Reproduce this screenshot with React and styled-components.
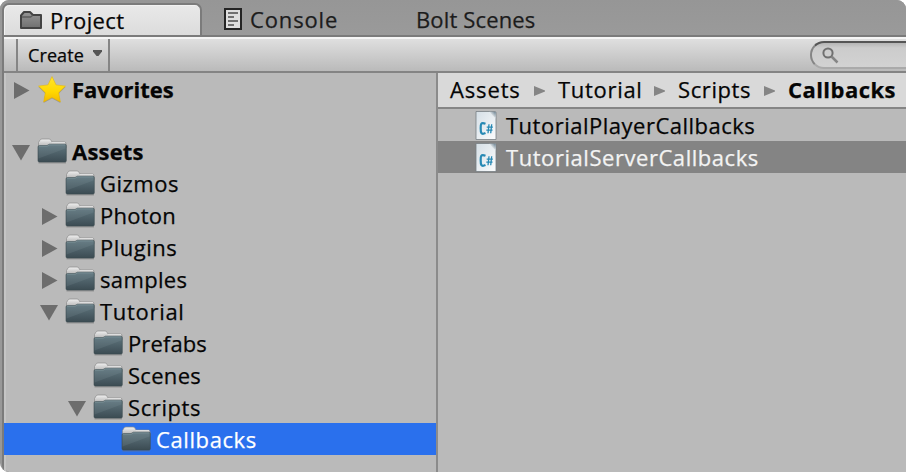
import React from "react";
import styled, { createGlobalStyle } from "styled-components";

const Global = createGlobalStyle`
  * { box-sizing: border-box; }
  body { margin: 0; background: #fff; overflow: hidden; }
`;

const Window = styled.div`
  width: 906px;
  height: 472px;
  display: flex;
  flex-direction: column;
  overflow: hidden;
  border-radius: 9px 9px 0 9px;
  background: #989898;
  font-family: "Open Sans", "Noto Sans", sans-serif;
  font-size: 22px;
  color: #050505;
`;

const TabBar = styled.div`
  height: 35px;
  flex: none;
  display: flex;
  align-items: flex-end;
  padding-left: 2px;
  background: linear-gradient(#969696, #9a9a9a);
`;

const Tab = styled.div`
  width: ${(p) => p.$width}px;
  height: 32px;
  display: flex;
  align-items: center;
  padding-left: ${(p) => p.$pad}px;
  color: #1c1c1c;
  svg { flex: none; }
`;

const ActiveTab = styled(Tab)`
  height: 32px;
  padding-bottom: 1px;
  border: 2px solid #7b7b7b;
  border-bottom: 0;
  border-radius: 7px 7px 0 0;
  background: linear-gradient(#e9e9e9, #dcdcdc);
  box-shadow: inset 1px 1px 0 #f2f2f2;
  color: #050505;
`;

const Label = styled.span`
  display: block;
  white-space: nowrap;
  line-height: 30px;
  margin-left: ${(p) => p.$gap || 0}px;
  font-weight: ${(p) => (p.$bold ? 700 : 400)};
  letter-spacing: ${(p) => p.$track || 0}px;
  -webkit-text-stroke: 0.25px currentColor;
`;

const Panel = styled.div`
  flex: 1;
  min-height: 0;
  display: flex;
  flex-direction: column;
  margin-left: 2px;
  border-left: 2px solid #7b7b7b;
  border-bottom-left-radius: 7px;
  background: #bababa;
`;

const Toolbar = styled.div`
  height: 38px;
  flex: none;
  display: flex;
  align-items: flex-start;
  justify-content: space-between;
  border-top: 2px solid #7b7b7b;
  border-bottom: 2px solid #848484;
  background: linear-gradient(#f5f5f5 0 2px, #dfdfdf 2px, #bababa);
`;

const CreateButton = styled.div`
  width: 94px;
  height: 32px;
  margin: 2px 0 0 12px;
  padding-left: 10px;
  display: flex;
  align-items: center;
  border: solid #858585;
  border-width: 0 2px;
  font-size: 18px;
  svg { margin: 0 0 4px 9px; }
`;

const Search = styled.div`
  width: 96px;
  height: 28px;
  margin-top: 4px;
  padding: 4px 0 0 10px;
  border: 2px solid #858585;
  border-top-color: #555;
  border-bottom-color: #aaa;
  border-right: 0;
  border-radius: 14px 0 0 14px;
  background: linear-gradient(#b5b5b5, #cccccc 5px, #d2d2d2);
`;

const Columns = styled.div`
  flex: 1;
  display: flex;
  min-height: 0;
`;

const Tree = styled.div`
  width: 434px;
  flex: none;
  border-right: 2px solid #8b8b8b;
  box-shadow: inset 2px 0 0 #c5c5c5;
`;

const TreeRow = styled.div`
  height: 32px;
  display: flex;
  align-items: center;
  margin-bottom: ${(p) => p.$after || 0}px;
  padding: 0 0 0 ${(p) => 7 + p.$depth * 28}px;
  background: ${(p) => (p.$selected ? "#2a70ed" : "transparent")};
  color: ${(p) => (p.$selected ? "#fff" : "inherit")};
`;

const Slot = styled.span`
  width: ${(p) => p.$width}px;
  height: 32px;
  flex: none;
  svg { display: block; }
`;

const Content = styled.div`
  flex: 1;
  min-width: 0;
`;

const Breadcrumbs = styled.div`
  height: 36px;
  display: flex;
  align-items: center;
  padding: 0 0 2px 12px;
  border-bottom: 2px solid #858585;
  background: #d9d9d9;
`;

const Crumb = styled.div`
  width: ${(p) => p.$width}px;
  flex: none;
  display: flex;
  align-items: center;
  justify-content: space-between;
  svg { margin: 4px 13px 0 0; }
`;

const FileRow = styled.div`
  height: 32px;
  display: flex;
  align-items: center;
  padding-left: 36px;
  background: ${(p) => (p.$selected ? "#848484" : "transparent")};
  color: ${(p) => (p.$selected ? "#f3f3f3" : "inherit")};
  svg { flex: none; }
`;

function Folder() {
  return (
    <svg width="32" height="32" viewBox="0 0 32 32">
      <defs>
        <linearGradient id="front" x1="0" y1="0" x2="0" y2="1">
          <stop offset="0" stopColor="#617780" />
          <stop offset="1" stopColor="#3b4b52" />
        </linearGradient>
        <linearGradient id="back" x1="0" y1="0" x2="0" y2="1">
          <stop offset="0" stopColor="#f0f0f0" />
          <stop offset="1" stopColor="#a9a9a9" />
        </linearGradient>
      </defs>
      <path d="M2.500 27.800h27.500" stroke="#777" strokeOpacity=".55" strokeWidth="1.200" />
      <path d="M2.500 13V7.500L4 5Q4.500 4 6 4h7q1.200 0 2 1.200L16 7H28.500q1.500 0 1.500 1.800V13z" fill="url(#back)" stroke="#8b8b8b" strokeWidth=".7" />
      <path d="M16 7.500h13" stroke="#dedede" />
      <path d="M2 12q0-1.500 1.500-1.500H11l2.500-1.300H29q1.300 0 1.300 1.300V25.800q0 1.300-1.300 1.300H3.400Q2 27.100 2 25.700z" fill="url(#front)" stroke="#3c4b51" strokeWidth=".6" />
      <path d="M2.500 11.500h8.700l2.500-1.500H29.500V13.500L2.500 23.500z" fill="#8ca3aa" fillOpacity=".16" />
      <path d="M3 11.200h8.200l2.500-1.300h15.600" fill="none" stroke="#83989e" strokeWidth=".7" />
    </svg>
  );
}

function Star() {
  return (
    <svg width="32" height="32" viewBox="0 0 32 32">
      <defs>
        <linearGradient id="gold" x1="0" y1="0" x2="0" y2="1">
          <stop offset="0" stopColor="#ffe42e" />
          <stop offset=".6" stopColor="#ffd800" />
          <stop offset="1" stopColor="#f2b800" />
        </linearGradient>
      </defs>
      <path d="M16 4.500l4.100 8.400 9.400 1.200-6.800 6.600 1.700 9.300-8.400-4.500-8.400 4.500 1.700-9.300-6.800-6.600 9.400-1.200z" fill="#777" opacity=".5" />
      <path d="M16 3.500l4.100 8.400 9.400 1.200-6.800 6.600 1.700 9.300-8.400-4.500-8.400 4.500 1.700-9.300-6.800-6.600 9.400-1.200z" fill="url(#gold)" stroke="#e5b400" strokeWidth=".5" />
    </svg>
  );
}

function Disclosure({ open }) {
  return (
    <svg width="28" height="32" viewBox="0 0 28 32">
      <path d={open ? "M1 10H19L10 25.500z" : "M3 9L18.500 17.500L3 26z"} fill="#6d6d6d" />
    </svg>
  );
}

function ScriptIcon() {
  return (
    <svg width="24" height="32" viewBox="0 0 24 32">
      <defs>
        <linearGradient id="paper" x1="0" y1="0" x2="1" y2="1">
          <stop offset="0" stopColor="#d5dfe6" />
          <stop offset="1" stopColor="#fbfcfd" />
        </linearGradient>
        <linearGradient id="fold" x1="0" y1="1" x2="1" y2="0">
          <stop offset=".35" stopColor="#fafafa" />
          <stop offset="1" stopColor="#60798a" />
        </linearGradient>
      </defs>
      <path d="M2 2.500h19q1 0 1 1V30.500H2z" fill="url(#paper)" stroke="#777f84" strokeWidth=".8" />
      <path d="M15.500 2.800q1.500 3 6.200 6.700V3z" fill="url(#fold)" />
      <path d="M11.500 14.800C6.200 12.800 6.700 16 6.700 19.500s0 6.800 4.800 4.600" fill="none" stroke="#2789b4" strokeWidth="2.200" />
      <path d="M15 15.200l-1 9M17.700 15.200l-1 9M12.700 18.200h6.200M12.300 21.200h6.200" fill="none" stroke="#2789b4" strokeWidth="1.300" />
    </svg>
  );
}

function ProjectIcon() {
  return (
    <svg width="24" height="20" viewBox="0 0 24 20">
      <defs>
        <linearGradient id="case" x1="0" y1="0" x2="0" y2="1">
          <stop offset="0" stopColor="#969696" />
          <stop offset="1" stopColor="#707070" />
        </linearGradient>
      </defs>
      <path d="M2 18V5.500L5 2h6l3 3h8v13z" fill="url(#case)" stroke="#434343" strokeWidth="2" strokeLinejoin="round" />
      <path d="M3 7h8.500l2-1.500" fill="none" stroke="#5c5c5c" strokeWidth="1.500" />
    </svg>
  );
}

function ConsoleIcon() {
  return (
    <svg width="18" height="22" viewBox="0 0 18 22">
      <path d="M1 1h16v20H1z" fill="#dedede" stroke="#242424" strokeWidth="2" />
      <path d="M4 5h10M4 9h6M4 13h10M4 17h6" stroke="#707070" strokeWidth="2" />
    </svg>
  );
}

const CrumbArrow = () => (
  <svg width="11" height="10" viewBox="0 0 11 10">
    <path d="M0 0l11 4.500v1L0 10z" fill="#858585" />
  </svg>
);

const tree = [
  { name: "Favorites", depth: 0, open: false, bold: true, star: true, after: 30, track: 0 },
  { name: "Assets", depth: 0, open: true, bold: true, track: 0.2 },
  { name: "Gizmos", depth: 1, track: 0.5 },
  { name: "Photon", depth: 1, open: false, track: 0.25 },
  { name: "Plugins", depth: 1, open: false, track: 0.5 },
  { name: "samples", depth: 1, open: false, track: 0.35 },
  { name: "Tutorial", depth: 1, open: true, track: 0.7 },
  { name: "Prefabs", depth: 2, track: 0.1 },
  { name: "Scenes", depth: 2, track: 0.3 },
  { name: "Scripts", depth: 2, open: true, track: 0.6 },
  { name: "Callbacks", depth: 3, selected: true, track: 0.6 },
];

const crumbs = [
  { name: "Assets", width: 108, track: 0.85 },
  { name: "Tutorial", width: 120, track: 0.7 },
  { name: "Scripts", width: 110, track: 0.6 },
  { name: "Callbacks", width: 110, bold: true, track: 0.45 },
];

const files = [
  { name: "TutorialPlayerCallbacks", track: 0.5 },
  { name: "TutorialServerCallbacks", selected: true, track: 0.55 },
];

export default function App() {
  return (
    <>
      <Global />
      <Window>
        <TabBar>
          <ActiveTab $width={200} $pad={15}>
            <ProjectIcon />
            <Label $gap={7} $track={0.4}>Project</Label>
          </ActiveTab>
          <Tab $width={212} $pad={22}>
            <ConsoleIcon />
            <Label $gap={8} $track={0.85}>Console</Label>
          </Tab>
          <Tab $width={200} $pad={2}>
            <Label $track={0.15}>Bolt Scenes</Label>
          </Tab>
        </TabBar>
        <Panel>
          <Toolbar>
            <CreateButton>
              <Label $track={0.1}>Create</Label>
              <svg width="9" height="6" viewBox="0 0 9 6">
                <path d="M0 0h9v1.500L5.500 6h-2L0 1.500z" fill="#555" />
              </svg>
            </CreateButton>
            <Search>
              <svg width="17" height="17" viewBox="0 0 17 17" display="block">
                <circle cx="6" cy="6" r="4.600" fill="none" stroke="#707070" strokeWidth="2" />
                <path d="M9.500 9.500l6 6" stroke="#858585" strokeWidth="2.500" />
              </svg>
            </Search>
          </Toolbar>
          <Columns>
            <Tree>
              {tree.map((n) => (
                <TreeRow key={n.name} $depth={n.depth} $selected={n.selected} $after={n.after}>
                  <Slot $width={25}>{n.open !== undefined && <Disclosure open={n.open} />}</Slot>
                  <Slot $width={32}>{n.star ? <Star /> : <Folder />}</Slot>
                  <Label $gap={4} $bold={n.bold} $track={n.track}>{n.name}</Label>
                </TreeRow>
              ))}
            </Tree>
            <Content>
              <Breadcrumbs>
                {crumbs.map((c) => (
                  <Crumb key={c.name} $width={c.width}>
                    <Label $bold={c.bold} $track={c.track}>{c.name}</Label>
                    {!c.bold && <CrumbArrow />}
                  </Crumb>
                ))}
              </Breadcrumbs>
              {files.map((f) => (
                <FileRow key={f.name} $selected={f.selected}>
                  <ScriptIcon />
                  <Label $gap={8} $track={f.track}>{f.name}</Label>
                </FileRow>
              ))}
            </Content>
          </Columns>
        </Panel>
      </Window>
    </>
  );
}
